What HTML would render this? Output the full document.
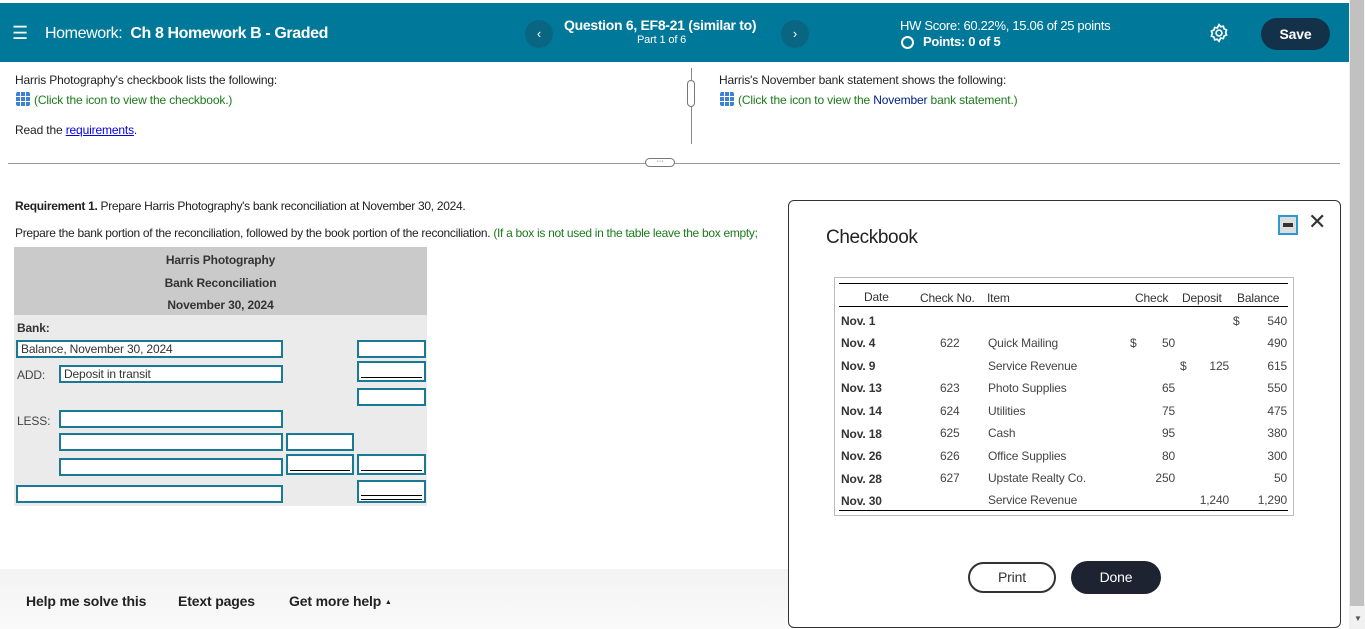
<!DOCTYPE html>
<html><head><meta charset="utf-8"><style>
*{box-sizing:border-box;margin:0;padding:0}
body{width:1365px;height:629px;overflow:hidden;position:relative;background:#fff;font-family:"Liberation Sans",Arial,sans-serif;color:#222;letter-spacing:-0.15px}
.a{position:absolute;white-space:nowrap}
.hdr{position:absolute;left:0;top:3px;width:1349px;height:59px;background:#00789a;color:#fff}
.sb{position:absolute;left:1349px;top:0;width:16px;height:629px;background:#f1f1f1}
.sbt{position:absolute;left:1350px;top:0;width:14px;height:606px;background:#c1c1c1}
.grid{display:inline-block;width:14px;height:14px;background:#3b82d6;border-radius:2px;vertical-align:-2px;margin-right:4px;background-image:linear-gradient(#fff,#fff),linear-gradient(#fff,#fff),linear-gradient(#fff,#fff),linear-gradient(#fff,#fff);background-size:1px 14px,1px 14px,14px 1px,14px 1px;background-position:4px 0,9px 0,0 4px,0 9px;background-repeat:no-repeat}
.inp{position:absolute;border:2px solid #1a7a95;background:#fff;height:18px;font-size:12px;color:#333;padding-left:3px;line-height:14px}
.ul::after{content:"";position:absolute;left:2px;right:2px;bottom:2px;border-bottom:1px solid #000}
.dul::after{content:"";position:absolute;left:2px;right:2px;bottom:1px;height:3px;border-top:1px solid #000;border-bottom:1px solid #000}
.ct{font-size:12px;color:#444}
.cb{font-weight:bold;color:#333}
</style></head><body>
<div class="hdr">
 <div class="a" style="left:12px;top:20px;font-size:18px">☰</div>
 <div class="a" style="left:45px;top:22px;font-size:16px;letter-spacing:-0.4px">Homework: <b>&nbsp;Ch 8 Homework B - Graded</b></div>
 <div class="a" style="left:525px;top:17px;width:28px;height:28px;border-radius:50%;background:#0a6583;text-align:center;line-height:28px;font-size:13px">‹</div>
 <div class="a" style="left:564px;top:14px;font-size:14px;font-weight:bold;letter-spacing:-0.3px">Question 6, EF8-21 (similar to)</div>
 <div class="a" style="left:637px;top:31px;font-size:11px">Part 1 of 6</div>
 <div class="a" style="left:781px;top:17px;width:28px;height:28px;border-radius:50%;background:#0a6583;text-align:center;line-height:28px;font-size:13px">›</div>
 <div class="a" style="left:900px;top:15px;font-size:13px;letter-spacing:-0.3px">HW Score: 60.22%, 15.06 of 25 points</div>
 <div class="a" style="left:901px;top:33px;width:13px;height:13px;border:2px solid #fff;border-radius:50%"></div>
 <div class="a" style="left:923px;top:31px;font-size:13px;font-weight:bold;letter-spacing:-0.3px">Points: 0 of 5</div>
 <svg class="a" style="left:1209px;top:20px" width="20" height="20" viewBox="0 0 24 24" fill="none" stroke="#fff" stroke-width="2"><path d="M12 2l2 2.5 3.2-.6.9 3.1 3 1.3-1.1 3 1.1 3-3 1.3-.9 3.1-3.2-.6L12 22l-2-2.5-3.2.6-.9-3.1-3-1.3 1.1-3-1.1-3 3-1.3.9-3.1 3.2.6z"/><circle cx="12" cy="12" r="3.5"/></svg>
 <div class="a" style="left:1261px;top:15px;width:69px;height:32px;border-radius:16px;background:#13324a;text-align:center;line-height:32px;font-size:14px;font-weight:bold">Save</div>
</div>
<div class="sb"></div><div class="sbt"></div>
<div class="a" style="left:1354px;top:614px;font-size:8px;color:#555">▼</div>

<div class="a" style="left:15px;top:73px;font-size:12px">Harris Photography's checkbook lists the following:</div>
<div class="a" style="left:16px;top:92px;font-size:12px;color:#1a7a1a"><span class="grid"></span>(Click the icon to view the checkbook.)</div>
<div class="a" style="left:15px;top:123px;font-size:12px">Read the <span style="color:#00e;text-decoration:underline">requirements</span>.</div>
<div class="a" style="left:691px;top:68px;width:1px;height:76px;background:#888"></div>
<div class="a" style="left:687px;top:80px;width:8px;height:27px;border:1px solid #777;border-radius:4px;background:#fff"></div>
<div class="a" style="left:719px;top:73px;font-size:12px">Harris's November bank statement shows the following:</div>
<div class="a" style="left:720px;top:92px;font-size:12px;color:#1a7a1a"><span class="grid"></span>(Click the icon to view the <span style="color:#00208a">November</span> bank statement.)</div>
<div class="a" style="left:8px;top:163px;width:1332px;height:1px;background:#999"></div>
<div class="a" style="left:645px;top:158px;width:30px;height:9px;border:1px solid #777;border-radius:5px;background:#fff;font-size:7px;text-align:center;line-height:6px">···</div>

<div class="a" style="left:15px;top:199px;font-size:12px;letter-spacing:-0.3px"><b>Requirement 1.</b> Prepare Harris Photography's bank reconciliation at November 30, 2024.</div>
<div class="a" style="left:15px;top:226px;font-size:12px;letter-spacing:-0.3px">Prepare the bank portion of the reconciliation, followed by the book portion of the reconciliation. <span style="color:#1a7a1a">(If a box is not used in the table leave the box empty;</span></div>

<div class="a" style="left:14px;top:247px;width:413px;height:68px;background:#cacaca"></div>
<div class="a" style="left:14px;top:315px;width:413px;height:191px;background:#ebebeb"></div>
<div class="a ct cb" style="left:14px;top:253px;width:413px;text-align:center">Harris Photography</div>
<div class="a ct cb" style="left:14px;top:276px;width:413px;text-align:center">Bank Reconciliation</div>
<div class="a ct cb" style="left:14px;top:298px;width:413px;text-align:center">November 30, 2024</div>
<div class="a ct cb" style="left:17px;top:321px">Bank:</div>
<div class="inp" style="left:16px;top:340px;width:267px">Balance, November 30, 2024</div>
<div class="inp" style="left:357px;top:340px;width:69px"></div>
<div class="a ct" style="left:17px;top:368px">ADD:</div>
<div class="inp" style="left:59px;top:365px;width:224px">Deposit in transit</div>
<div class="inp ul" style="left:357px;top:361px;width:69px;height:21px"></div>
<div class="inp" style="left:357px;top:388px;width:69px"></div>
<div class="a ct" style="left:17px;top:414px">LESS:</div>
<div class="inp" style="left:59px;top:410px;width:224px"></div>
<div class="inp" style="left:59px;top:433px;width:224px"></div>
<div class="inp" style="left:286px;top:433px;width:68px"></div>
<div class="inp" style="left:59px;top:458px;width:224px"></div>
<div class="inp ul" style="left:286px;top:454px;width:68px;height:21px"></div>
<div class="inp ul" style="left:357px;top:454px;width:69px;height:21px"></div>
<div class="inp" style="left:16px;top:485px;width:267px"></div>
<div class="inp dul" style="left:357px;top:480px;width:69px;height:23px"></div>

<div class="a" style="left:0;top:569px;width:789px;height:60px;background:linear-gradient(#f3f3f3,#fafafa)"></div>
<div class="a" style="left:26px;top:593px;font-size:14px;font-weight:bold;color:#222">Help me solve this</div>
<div class="a" style="left:178px;top:593px;font-size:14px;font-weight:bold;color:#222">Etext pages</div>
<div class="a" style="left:289px;top:593px;font-size:14px;font-weight:bold;color:#222">Get more help <span style="font-size:7px;vertical-align:2px">▲</span></div>

<div class="a" style="left:788px;top:200px;width:553px;height:428px;border:1px solid #333;border-radius:6px;background:#fff"></div>
<div class="a" style="left:826px;top:227px;font-size:19px;color:#222;letter-spacing:-0.4px">Checkbook</div>
<div class="a" style="left:1278px;top:215px;width:20px;height:20px;border:2px solid #2a9ad6;background:#ddd"><div style="position:absolute;left:3px;top:6px;width:10px;height:4px;background:#333"></div></div>
<div class="a" style="left:1308px;top:209px;font-size:22px;color:#333">✕</div>

<div class="a" style="left:834px;top:277px;width:460px;height:239px;border:1px solid #bbb"></div>
<div class="a" style="left:839px;top:283px;width:449px;height:1px;background:#000"></div>
<div class="a" style="left:839px;top:306px;width:449px;height:1px;background:#000"></div>
<div class="a" style="left:839px;top:510px;width:449px;height:1px;background:#000"></div>
<div class="a ct" style="left:864px;top:290px;color:#333">Date</div>
<div class="a ct" style="left:920px;top:291px;color:#333">Check No.</div>
<div class="a ct" style="left:987px;top:291px;color:#333">Item</div>
<div class="a ct" style="left:1135px;top:291px;color:#333">Check</div>
<div class="a ct" style="left:1182px;top:291px;color:#333">Deposit</div>
<div class="a ct" style="left:1237px;top:291px;color:#333">Balance</div>
<div style="position:absolute;left:0;top:0;font-size:12px;color:#444">
<div class="a cb" style="left:841px;top:314px">Nov. 1</div><div class="a" style="left:1233px;top:314px">$</div><div class="a" style="left:1250px;top:314px;width:37px;text-align:right">540</div>
<div class="a cb" style="left:841px;top:336px">Nov. 4</div><div class="a" style="left:940px;top:336px">622</div><div class="a" style="left:988px;top:336px">Quick Mailing</div><div class="a" style="left:1130px;top:336px">$</div><div class="a" style="left:1140px;top:336px;width:35px;text-align:right">50</div><div class="a" style="left:1250px;top:336px;width:37px;text-align:right">490</div>
<div class="a cb" style="left:841px;top:359px">Nov. 9</div><div class="a" style="left:988px;top:359px">Service Revenue</div><div class="a" style="left:1180px;top:359px">$</div><div class="a" style="left:1190px;top:359px;width:39px;text-align:right">125</div><div class="a" style="left:1250px;top:359px;width:37px;text-align:right">615</div>
<div class="a cb" style="left:841px;top:381px">Nov. 13</div><div class="a" style="left:940px;top:381px">623</div><div class="a" style="left:988px;top:381px">Photo Supplies</div><div class="a" style="left:1140px;top:381px;width:35px;text-align:right">65</div><div class="a" style="left:1250px;top:381px;width:37px;text-align:right">550</div>
<div class="a cb" style="left:841px;top:404px">Nov. 14</div><div class="a" style="left:940px;top:404px">624</div><div class="a" style="left:988px;top:404px">Utilities</div><div class="a" style="left:1140px;top:404px;width:35px;text-align:right">75</div><div class="a" style="left:1250px;top:404px;width:37px;text-align:right">475</div>
<div class="a cb" style="left:841px;top:427px">Nov. 18</div><div class="a" style="left:940px;top:426px">625</div><div class="a" style="left:988px;top:426px">Cash</div><div class="a" style="left:1140px;top:426px;width:35px;text-align:right">95</div><div class="a" style="left:1250px;top:426px;width:37px;text-align:right">380</div>
<div class="a cb" style="left:841px;top:449px">Nov. 26</div><div class="a" style="left:940px;top:449px">626</div><div class="a" style="left:988px;top:449px">Office Supplies</div><div class="a" style="left:1140px;top:449px;width:35px;text-align:right">80</div><div class="a" style="left:1250px;top:449px;width:37px;text-align:right">300</div>
<div class="a cb" style="left:841px;top:472px">Nov. 28</div><div class="a" style="left:940px;top:471px">627</div><div class="a" style="left:988px;top:471px">Upstate Realty Co.</div><div class="a" style="left:1140px;top:471px;width:35px;text-align:right">250</div><div class="a" style="left:1250px;top:471px;width:37px;text-align:right">50</div>
<div class="a cb" style="left:841px;top:494px">Nov. 30</div><div class="a" style="left:988px;top:493px">Service Revenue</div><div class="a" style="left:1190px;top:493px;width:39px;text-align:right">1,240</div><div class="a" style="left:1250px;top:493px;width:37px;text-align:right">1,290</div>
</div>
<div class="a" style="left:968px;top:562px;width:88px;height:31px;border:2px solid #333;border-radius:16px;text-align:center;line-height:27px;font-size:14px;color:#333">Print</div>
<div class="a" style="left:1071px;top:561px;width:90px;height:33px;border-radius:17px;background:#1d2330;color:#fff;text-align:center;line-height:33px;font-size:14px">Done</div>
</body></html>
